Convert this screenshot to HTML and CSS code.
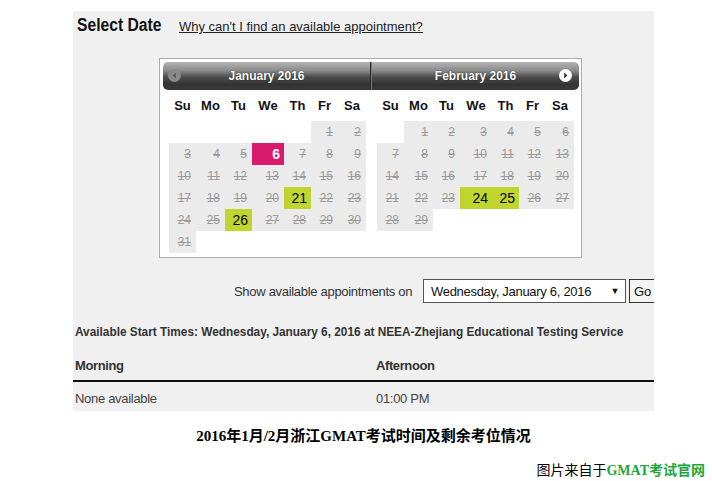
FILE: index.html
```html
<!DOCTYPE html>
<html>
<head>
<meta charset="utf-8">
<link rel="stylesheet" href="styles.css">
</head>
<body>
<div class="panel">
  <div class="title-row">
    <h1 class="title"><span class="narrow">Select Date</span></h1>
    <a class="why" href="#">Why can't I find an available appointment?</a>
  </div>

  <div class="calendar">
    <div class="month">
      <div class="month-head head-left">
        <span class="nav nav-prev"><svg width="13" height="13" viewBox="0 0 13 13"><circle cx="6.5" cy="6.5" r="6.5" fill="#8a8a8a"/><path d="M7.8 3.6 L4.6 6.5 L7.8 9.4 Z" fill="#5a5a5a"/></svg></span>
        <span class="month-name">January 2016</span>
      </div>
      <div class="days">
        <div class="dn">Su</div><div class="dn">Mo</div><div class="dn">Tu</div><div class="dn">We</div><div class="dn">Th</div><div class="dn">Fr</div><div class="dn">Sa</div>
        <div class="d e"></div><div class="d e"></div><div class="d e"></div><div class="d e"></div><div class="d e"></div><div class="d x">1</div><div class="d x">2</div>
        <div class="d x">3</div><div class="d x">4</div><div class="d x">5</div><div class="d sel">6</div><div class="d x">7</div><div class="d x">8</div><div class="d x">9</div>
        <div class="d x">10</div><div class="d x">11</div><div class="d x">12</div><div class="d x">13</div><div class="d x">14</div><div class="d x">15</div><div class="d x">16</div>
        <div class="d x">17</div><div class="d x">18</div><div class="d x">19</div><div class="d x">20</div><div class="d av">21</div><div class="d x">22</div><div class="d x">23</div>
        <div class="d x">24</div><div class="d x">25</div><div class="d av">26</div><div class="d x">27</div><div class="d x">28</div><div class="d x">29</div><div class="d x">30</div>
        <div class="d x">31</div><div class="d e"></div><div class="d e"></div><div class="d e"></div><div class="d e"></div><div class="d e"></div><div class="d e"></div>
      </div>
    </div>
    <div class="month">
      <div class="month-head head-right">
        <span class="month-name">February 2016</span>
        <span class="nav nav-next"><svg width="13" height="13" viewBox="0 0 13 13"><circle cx="6.5" cy="6.5" r="6.5" fill="#ffffff"/><path d="M5.2 3.6 L8.4 6.5 L5.2 9.4 Z" fill="#333333"/></svg></span>
      </div>
      <div class="days">
        <div class="dn">Su</div><div class="dn">Mo</div><div class="dn">Tu</div><div class="dn">We</div><div class="dn">Th</div><div class="dn">Fr</div><div class="dn">Sa</div>
        <div class="d e"></div><div class="d x">1</div><div class="d x">2</div><div class="d x">3</div><div class="d x">4</div><div class="d x">5</div><div class="d x">6</div>
        <div class="d x">7</div><div class="d x">8</div><div class="d x">9</div><div class="d x">10</div><div class="d x">11</div><div class="d x">12</div><div class="d x">13</div>
        <div class="d x">14</div><div class="d x">15</div><div class="d x">16</div><div class="d x">17</div><div class="d x">18</div><div class="d x">19</div><div class="d x">20</div>
        <div class="d x">21</div><div class="d x">22</div><div class="d x">23</div><div class="d av">24</div><div class="d av">25</div><div class="d x">26</div><div class="d x">27</div>
        <div class="d x">28</div><div class="d x">29</div><div class="d e"></div><div class="d e"></div><div class="d e"></div><div class="d e"></div><div class="d e"></div>
      </div>
    </div>
  </div>

  <div class="show-row">
    <span class="show-label">Show available appointments on</span>
    <div class="select"><span>Wednesday, January 6, 2016</span><span class="arrow">▼</span></div>
    <div class="go">Go</div>
  </div>

  <div class="avail"><span class="narrow">Available Start Times: Wednesday, January 6, 2016 at NEEA-Zhejiang Educational Testing Service</span></div>

  <div class="times">
    <div class="th">Morning</div>
    <div class="th">Afternoon</div>
    <div class="td">None available</div>
    <div class="td">01:00 PM</div>
  </div>
</div>

<div class="caption">2016年1月/2月浙江GMAT考试时间及剩余考位情况</div>
<div class="credit">图片来自于<span class="site">GMAT考试官网</span></div>
</body>
</html>
```

FILE: styles.css
```css
* { box-sizing: border-box; }
body {
  margin: 0;
  background: #fff;
  font-family: "Liberation Sans", Arial, sans-serif;
  color: #333;
}
.panel {
  margin: 11px 0 0 73px;
  width: 581px;
  height: 400px;
  background: #f0f0f0;
  overflow: hidden;
}
.narrow {
  display: inline-block;
  white-space: nowrap;
  transform-origin: 0 50%;
}
.title-row {
  display: flex;
  align-items: baseline;
  height: 47px;
  padding: 4px 0 0 4px;
}
.title {
  margin: 0;
  width: 102px;
  flex: none;
  font-weight: bold;
  font-size: 18px;
  line-height: 20px;
  color: #111;
}
.title .narrow { transform: scaleX(0.87); }
.why {
  font-size: 13px;
  color: #222;
  text-decoration: underline;
}
.calendar {
  margin-left: 86px;
  width: 423px;
  height: 200px;
  border: 1px solid #aaa;
  background: #fff;
  padding: 3px 2px 0 3px;
  display: flex;
}
.month { width: 208px; }
.month-head {
  height: 28px;
  background: linear-gradient(#b4b4b4 0%, #8c8c8c 30%, #4a4a4a 55%, #333 80%, #3a3a3a 100%);
  display: flex;
  align-items: center;
  justify-content: center;
  position: relative;
  color: #fff;
  font-weight: bold;
  font-size: 12px;
}
.head-left { border-radius: 5px 0 0 5px; border-right: 1px solid #2a2a2a; }
.head-right { border-radius: 0 5px 5px 0; border-left: 1px solid #777; }
.month-name { text-shadow: 0 0 1px #000; }
.nav {
  position: absolute;
  top: 7px;
  width: 13px;
  height: 13px;
  display: block;
}
.nav svg { display: block; }
.nav-prev { left: 5px; }
.nav-next { right: 7px; }
.days {
  margin-left: 6px;
  display: grid;
  grid-template-columns: 27px 29px 27px 32px 27px 27px 28px;
  grid-template-rows: 31px repeat(6, 22px);
}
.dn {
  display: flex;
  align-items: center;
  justify-content: center;
  font-weight: bold;
  font-size: 13px;
  color: #111;
}
.d {
  display: flex;
  align-items: center;
  justify-content: flex-end;
  padding-right: 5px;
  font-size: 12px;
}
.x {
  background: #ebebeb;
  color: #9a9a9a;
  text-decoration: line-through;
}
.av {
  background: #c0d62e;
  color: #000;
  font-size: 14px;
  padding-right: 4px;
}
.sel {
  background: #d81b6f;
  color: #fff;
  font-weight: bold;
  font-size: 14px;
  padding-right: 4px;
}
.show-row {
  margin-top: 21px;
  display: flex;
  align-items: center;
  height: 24px;
  padding-left: 161px;
  font-size: 13px;
}
.show-label { flex: none; width: 189px; white-space: nowrap; color: #333; letter-spacing: -0.3px; }
.select {
  flex: none;
  width: 203px;
  height: 24px;
  border: 1px solid #555;
  background: #fff;
  display: flex;
  align-items: center;
  justify-content: space-between;
  padding: 0 6px 0 7px;
  color: #111;
  font-size: 13px;
  letter-spacing: -0.3px;
  white-space: nowrap;
}
.arrow { font-size: 9px; color: #111; }
.go {
  margin-left: 3px;
  flex: none;
  width: 32px;
  height: 24px;
  border: 1px solid #333;
  background: #f4f4f4;
  padding-left: 4px;
  display: flex;
  align-items: center;
  color: #111;
}
.avail {
  margin-top: 21px;
  padding-left: 2px;
  font-weight: bold;
  font-size: 13px;
  color: #333;
  line-height: 16px;
  white-space: nowrap;
}
.avail .narrow { transform: scaleX(0.91); }
.times {
  margin-top: 17px;
  display: grid;
  grid-template-columns: 301px 1fr;
  grid-template-rows: 25px 30px;
}
.th {
  font-weight: bold;
  font-size: 13px;
  color: #333;
  padding-left: 2px;
  border-bottom: 2px solid #111;
  padding-top: 1px;
  letter-spacing: -0.4px;
}
.td {
  font-size: 13px;
  color: #444;
  padding-left: 2px;
  padding-top: 9px;
  letter-spacing: -0.3px;
}
.caption {
  width: 581px;
  margin: 13px 0 0 73px;
  text-align: center;
  font-family: "Liberation Serif", "Noto Sans CJK SC", serif;
  font-weight: bold;
  font-size: 15px;
  color: #000;
}
.credit {
  margin-top: 14px;
  text-align: right;
  padding-right: 7px;
  font-family: "Liberation Serif", "Noto Sans CJK SC", serif;
  font-size: 14px;
  color: #000;
}
.site { color: #1aa83c; font-weight: bold; }
```
